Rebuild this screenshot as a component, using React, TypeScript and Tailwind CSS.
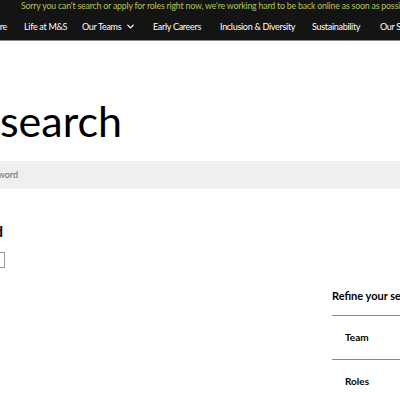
import { ChevronDown, X } from "lucide-react";

const navItems = [
    {label: "Life at M&S", w: "w-[41px]"},
    {label: "Our Teams", w: "w-[54px]"},
    {label: "Early Careers", w: "w-[50px]"},
    {label: "Inclusion & Diversity", w: "w-[75px]"},
    {label: "Sustainability", w: "w-[51px]"},
    {label: "Our Stories", w: "w-[45px]"},
];

export default function App() {
    return (
        <div className="w-[400px] h-[400px] overflow-hidden bg-white text-black" style={{fontFamily: 'Lato, "Noto Sans", sans-serif'}}>
            {/* header */}
            <div className="bg-[#141414] h-[40px] border-b border-[#8a8a8a] box-content whitespace-nowrap overflow-hidden">
                <div className="pl-[21px] text-[8.8px] tracking-[-0.2px] leading-[12px] text-[#b6c25c]">
                    Sorry you can't search or apply for roles right now, we're working hard to be back online as soon as possible.
                </div>
                <div className="flex items-center gap-[17px] mt-[8px] text-[9px] tracking-[-0.3px] text-white">
                    <span className="w-[60px] shrink-0 ml-[-53px] text-right">Explore</span>
                    {navItems.map((item) => (
                        <span key={item.label} className={`${item.w} shrink-0 flex items-center justify-between`}>
                            {item.label}
                            {item.label === "Our Teams" && <ChevronDown size={11} strokeWidth={3}/>}
                        </span>
                    ))}
                </div>
            </div>

            {/* title */}
            <div className="mt-[56px] w-[222px] ml-[-100px] text-right whitespace-nowrap text-[43px] leading-[48px]">
                Job search
            </div>

            <div className="mt-[16px] bg-[#efefef] h-[28px] flex items-center whitespace-nowrap overflow-hidden">
                <span className="w-[100px] ml-[-82px] shrink-0 text-right text-[9px] text-[#666]">Search by keyword</span>
            </div>

            <div className="flex">
                <div className="w-[332px] shrink-0 whitespace-nowrap">
                    <div className="mt-[32px] w-[120px] ml-[-117px] text-right text-[15px] font-bold leading-[20px]">0 jobs found</div>
                    <div className="mt-[11px] ml-[-11px] w-[16px] h-[16px] border border-[#999] flex items-center justify-center">
                        <X size={10} className="text-[#666]"/>
                    </div>
                </div>
                <div className="flex-1 pt-[100px] whitespace-nowrap text-[10px] font-bold">
                    <div className="leading-[14px] text-[11px]">Refine your search</div>
                    <div className="mt-[12px] border-t border-[#888] h-[44px] flex items-center pl-[13px]">Team</div>
                    <div className="border-t border-[#888] h-[44px] flex items-center pl-[13px]">Roles</div>
                </div>
            </div>
        </div>
    );
}
